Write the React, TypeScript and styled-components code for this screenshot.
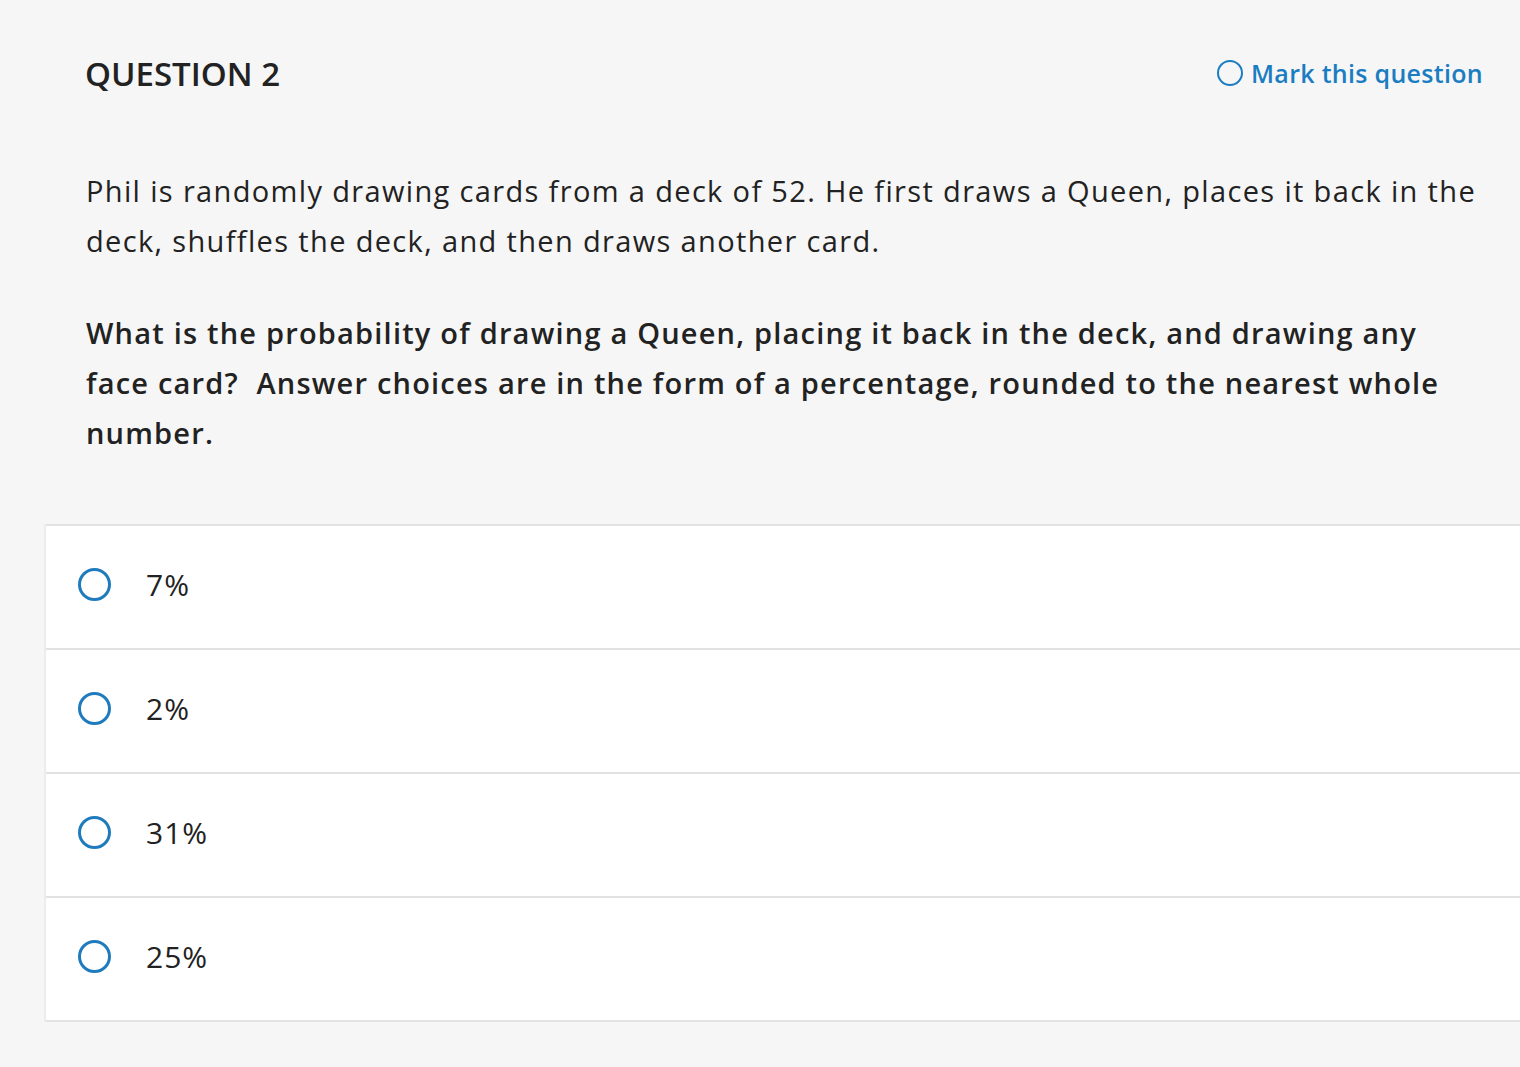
import React from "react";
import styled, { createGlobalStyle } from "styled-components";

const Global = createGlobalStyle`
  html, body { margin: 0; padding: 0; background: #f6f6f6; }
  body { font-family: "Open Sans", Lato, sans-serif; color: #222; }
`;

const Page = styled.div`
  width: 1520px;
  min-height: 1067px;
  background: #f6f6f6;
  box-sizing: border-box;
  padding-top: 51px;
`;

const Header = styled.div`
  display: flex;
  justify-content: space-between;
  align-items: center;
  padding: 0 37px 0 85px;
  height: 44px;
`;

const Title = styled.h2`
  margin: 0;
  font-size: 33px;
  font-weight: 600;
  color: #222;
`;

const MarkButton = styled.button`
  display: flex;
  align-items: center;
  gap: 8px;
  background: none;
  border: none;
  padding: 0;
  font-family: inherit;
  font-size: 25px;
  font-weight: 600;
  letter-spacing: 0.3px;
  color: #1a7dc2;
  cursor: pointer;
`;

const MarkCircle = styled.span`
  box-sizing: border-box;
  width: 26px;
  height: 26px;
  border: 2.5px solid #1a7dc2;
  border-radius: 50%;
`;

const Body = styled.div`
  padding: 71px 38px 0 86px;
`;

const Para = styled.p<{ $bold?: boolean }>`
  margin: 0 0 42px 0;
  font-size: 29px;
  line-height: 50px;
  font-weight: ${(p) => (p.$bold ? 600 : 400)};
  letter-spacing: ${(p) => (p.$bold ? "1.2px" : "1.35px")};
  color: #222;
`;

const Choices = styled.div`
  margin: 66px 0 0 44px;
  background: #fff;
  border-left: 2px solid #ececec;
`;

const Choice = styled.label`
  display: flex;
  align-items: center;
  box-sizing: border-box;
  height: 124px;
  padding: 0 0 6px 32px;
  border-top: 2px solid #e2e2e2;
  gap: 35px;
  font-size: 30px;
  letter-spacing: 1px;
  color: #222;
  &:last-child { border-bottom: 2px solid #e2e2e2; height: 126px; }
`;

const Radio = styled.span`
  width: 27px;
  height: 27px;
  border: 3px solid #1f7bbd;
  border-radius: 50%;
  flex: none;
`;

const choices = ["7%", "2%", "31%", "25%"];

export default function App() {
  return (
    <Page>
      <Global />
      <Header>
        <Title>QUESTION 2</Title>
        <MarkButton>
          <MarkCircle />
          Mark this question
        </MarkButton>
      </Header>
      <Body>
        <Para>
          Phil is randomly drawing cards from a deck of 52. He first draws a Queen, places it back in the deck,
          shuffles the deck, and then draws another card.
        </Para>
        <Para $bold>
          What is the probability of drawing a Queen, placing it back in the deck, and drawing any face card?&nbsp;
          Answer choices are in the form of a percentage, rounded to the nearest whole number.
        </Para>
      </Body>
      <Choices>
        {choices.map((c) => (
          <Choice key={c}>
            <Radio />
            {c}
          </Choice>
        ))}
      </Choices>
    </Page>
  );
}
